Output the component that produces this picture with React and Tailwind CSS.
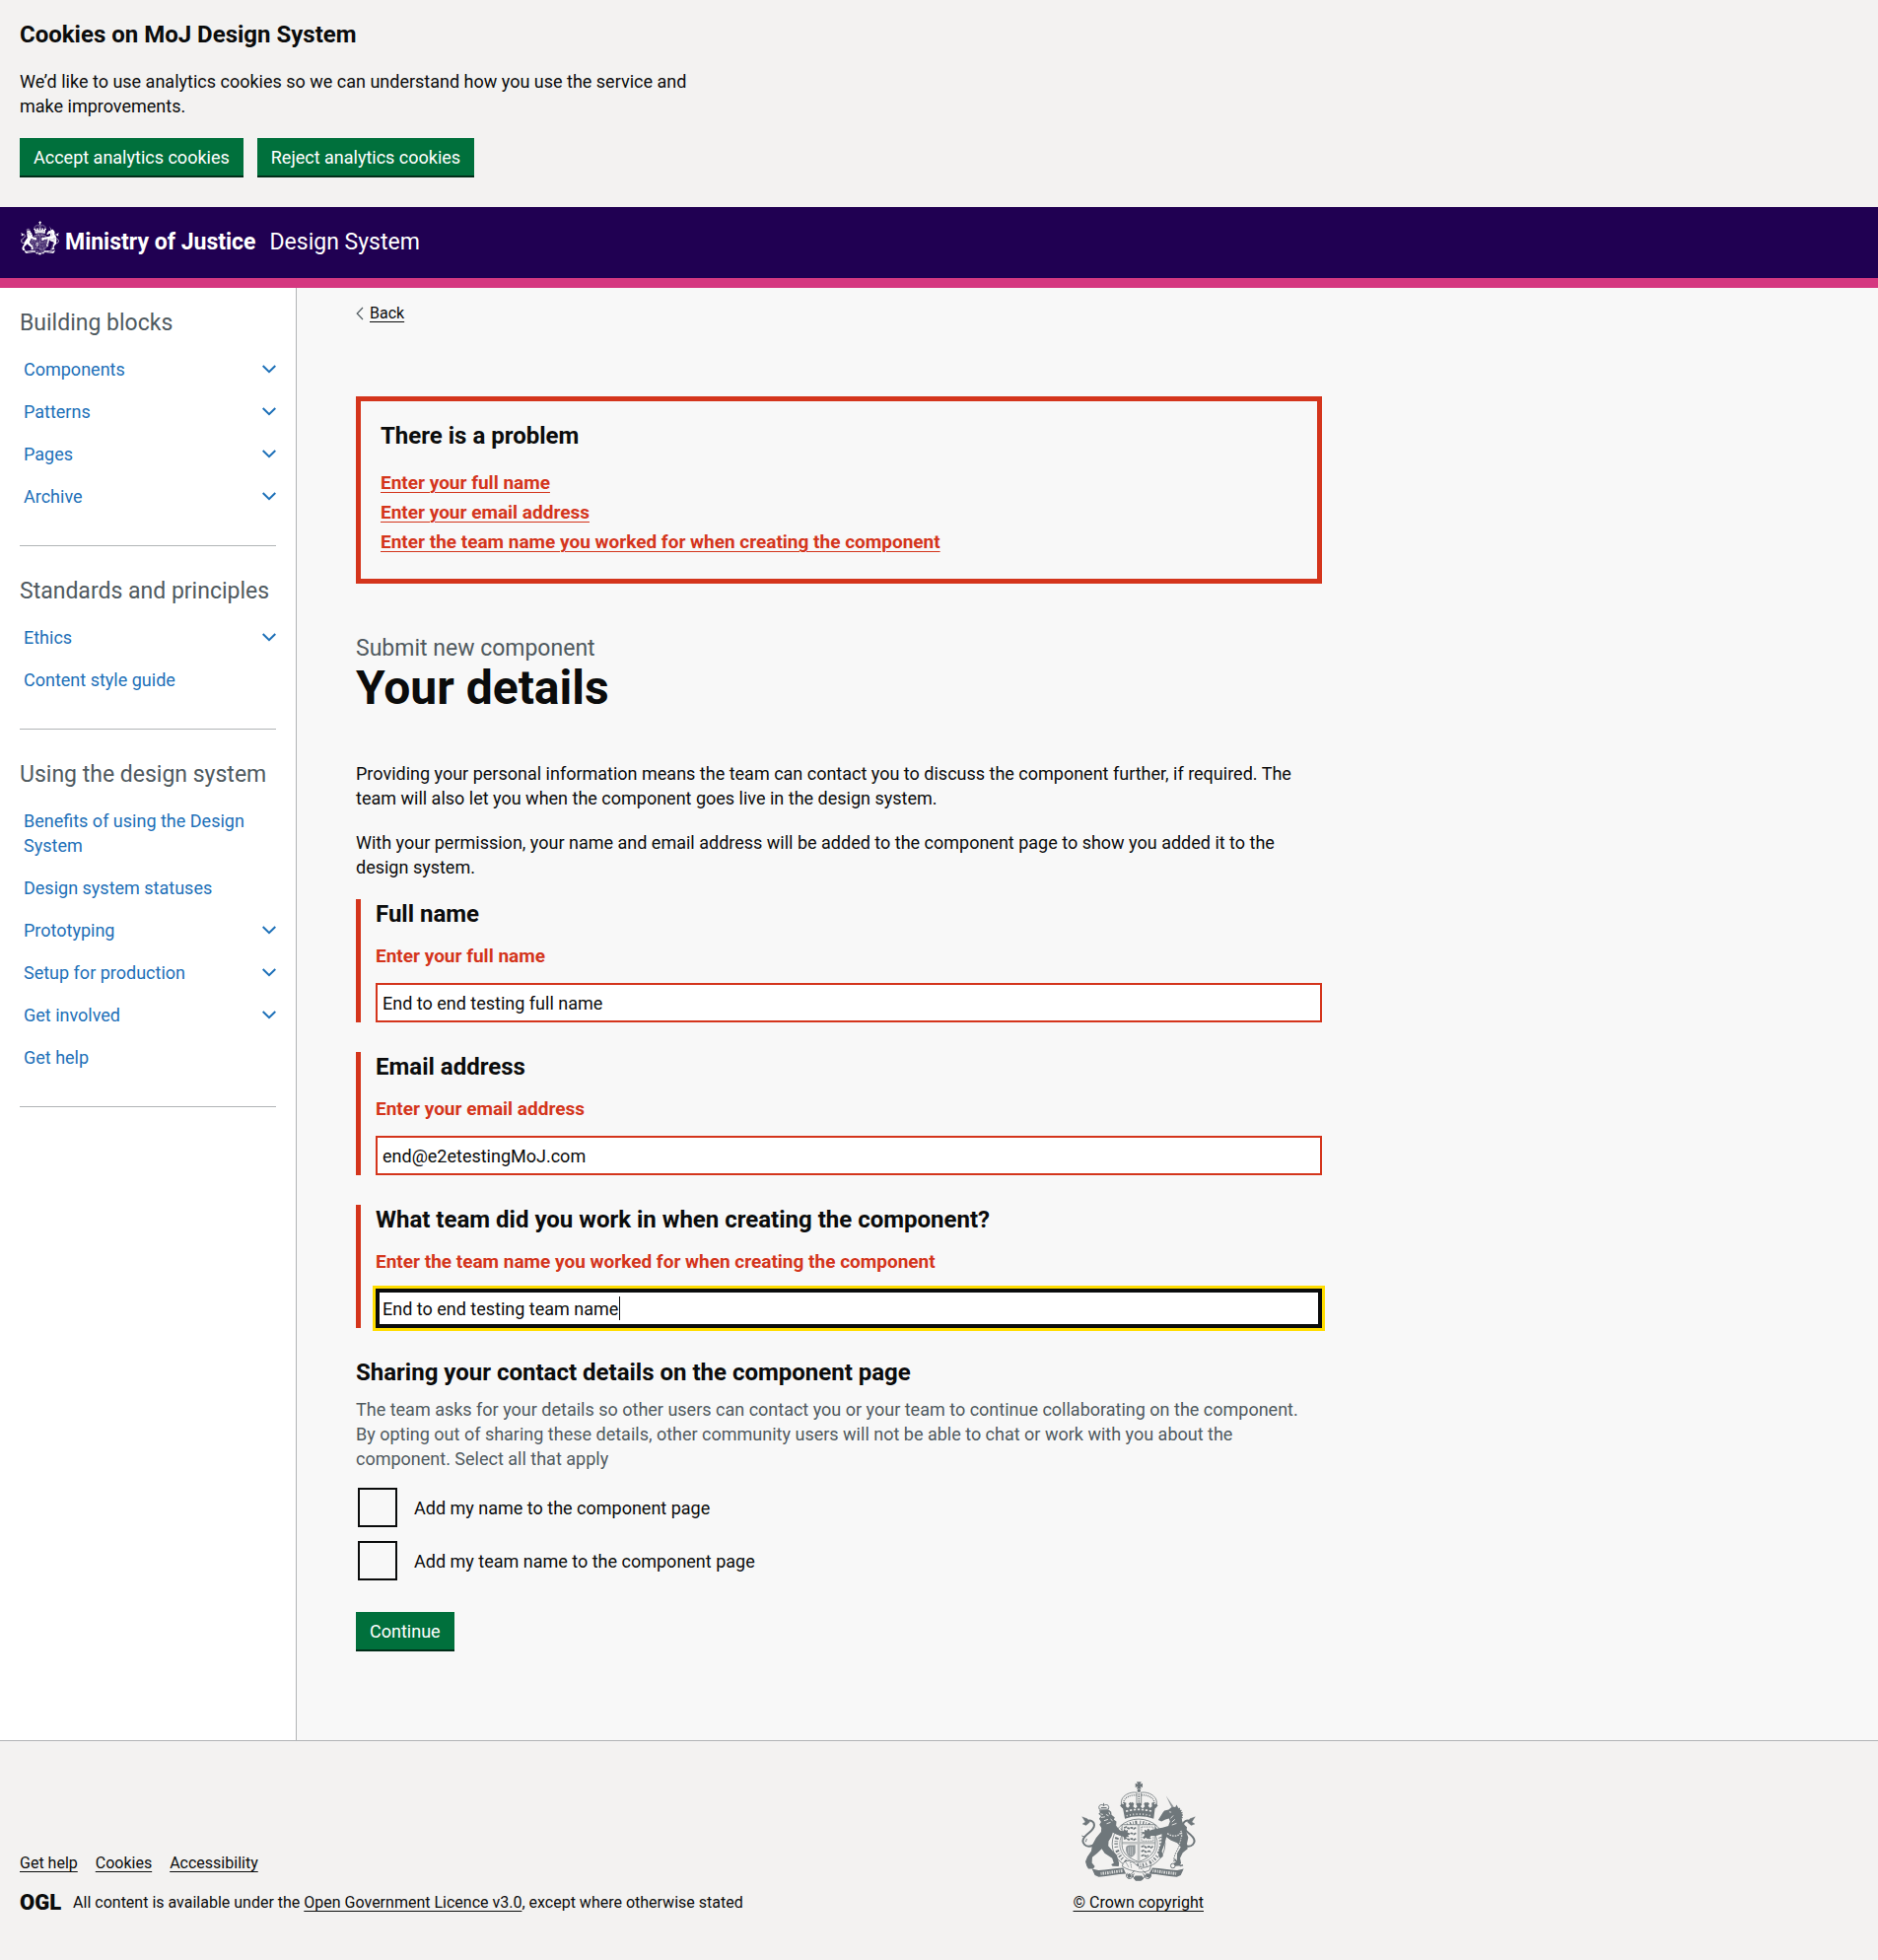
import { useId } from "react";

const navSections = [
  {
    title: "Building blocks",
    items: [
      { label: "Components", expandable: true },
      { label: "Patterns", expandable: true },
      { label: "Pages", expandable: true },
      { label: "Archive", expandable: true },
    ],
  },
  {
    title: "Standards and principles",
    items: [
      { label: "Ethics", expandable: true },
      { label: "Content style guide" },
    ],
  },
  {
    title: "Using the design system",
    items: [
      { label: "Benefits of using the Design System" },
      { label: "Design system statuses" },
      { label: "Prototyping", expandable: true },
      { label: "Setup for production", expandable: true },
      { label: "Get involved", expandable: true },
      { label: "Get help" },
    ],
  },
];

const errors = [
  { id: "full-name", text: "Enter your full name" },
  { id: "email", text: "Enter your email address" },
  { id: "team", text: "Enter the team name you worked for when creating the component" },
];

/* Royal coat of arms in the current text colour; `paper` is the colour of its engraved lines. */
function Crest({ className, paper }) {
  return (
    <svg viewBox="81 77 350 308" className={className} fill="currentColor" aria-hidden="true">
      {/* crown */}
      <path d="M250 78h14l-3 7 7-3v13l-7-3 3 8h-14l3-8-7 3v-13l7 3z" />
      <circle cx="257" cy="105" r="5" />
      <g fill="none" stroke="currentColor">
        <path d="M207 158C190 124 228 106 252 111" strokeWidth="2.5" />
        <path d="M307 158c17-34-21-52-45-47" strokeWidth="2.5" />
        <path d="M213 155C200 128 232 116 250 119" strokeWidth="4" strokeDasharray="3 3" />
        <path d="M301 155c13-27-19-39-37-36" strokeWidth="4" strokeDasharray="3 3" />
        <path d="M250 112v34M264 112v34" strokeWidth="2.5" />
        <path d="M257 114v32" strokeWidth="5" strokeDasharray="4 3" />
      </g>
      <path d="M208 160l-9-9 5-7 6 4 1-8 7 3-1 10 6 5 6-6-4-7 6-5 3 3 3-3 5 5-3 8 7 6 6-6-4-6 4-5 4 2 1-8 1 8 4-2 4 5-4 6 6 6 7-6-3-8 5-5 3 3 3-3 6 5-4 7 6 6 6-5-1-10 7-3 1 8 6-4 5 7-9 9-4 31c-28-10-60-10-88 0z" />
      <g fill="none" stroke={paper} strokeOpacity=".9">
        <path d="M217 168c26-7 54-7 80 0" strokeWidth="5" strokeDasharray="7 5" />
        <path d="M219 182c25-7 51-7 76 0" strokeWidth="5" strokeDasharray="3 7" />
      </g>

      {/* garter ring */}
      <g fill="none" stroke="currentColor">
        <ellipse cx="256" cy="268" rx="81" ry="76" strokeWidth="2.5" />
        <ellipse cx="256" cy="268" rx="58" ry="57" strokeWidth="2" />
        <ellipse cx="256" cy="268" rx="69" ry="66" strokeWidth="11" strokeDasharray="3 6 4 5 2 5 6 9" />
      </g>

      {/* shield */}
      <path d="M205 209h102v62c0 28-26 43-51 52-25-9-51-24-51-52z" fill={paper} stroke="currentColor" strokeWidth="2.5" />
      <path d="M256 210v110M206 265h100" fill="none" stroke="currentColor" strokeOpacity=".4" strokeWidth="8" />
      <g fill="none" stroke="currentColor" strokeWidth="5" strokeLinejoin="round" strokeDasharray="9 2">
        <path d="M211 219l8-3 6 5 10-3 6 4 8-5M211 236l8-3 6 5 10-3 6 4 8-5M211 253l8-3 6 5 10-3 6 4 8-5" />
        <path d="M264 277l8-3 6 5 10-3 6 4 6-5M264 291l8-3 6 5 10-3 6 4M264 305l8-3 6 4 8-3" />
      </g>
      <path d="M265 216h36v43h-36z" fill="none" stroke="currentColor" strokeWidth="2.5" strokeDasharray="3 2" />
      <path d="M274 224l7 3 3-6 7 4-3 8 7-3-2 9-7 2 4 6 5 5-9 1-6-6-7 6-5-5 6-6-2-6-6 3 1-8 7 1z" />
      <path d="M218 276c8-7 19-2 28-5v24c-2 8-8 12-14 14-10-6-18-18-14-33z" fillOpacity=".75" />
      <path d="M225 278v20M231 277v26M237 277v26" stroke={paper} strokeWidth="2" strokeOpacity=".7" />

      {/* lion */}
      <path d="M136 162c-6-14 8-17 13-11 6-6 20-3 14 11z" fill="none" stroke="currentColor" strokeWidth="3" />
      <path d="M149 143v9M141 157h17" stroke="currentColor" strokeWidth="3" />
      <path d="M135 165l29-2 8 7 1 9 10 8-3 6 8 6-1 13 12 15 10 2 3-7 5 5 6-2-1 8 6 3-5 5 4 6-9-1-4 6-6-7-19-6-12-6-4 12-9 15-1 14 13 15 13 13 7 25-1 10-19-1-4-5 8-4-5-15-23-15-9-14-14 14-15 12-1 17 9 11-5 7-15 0-5-8-4-14 6-15 12-17 3-19 12-22 15-18 1-12-6-10 5-8-6-10 6-8-8-7 5-5z" />
      <g fill="none" stroke={paper} strokeWidth="3" strokeOpacity=".85">
        <path d="M139 176l8 2M141 187l12-2M150 197l12-4M158 206l12-4M156 178l8 4M170 192l6 5M165 170l3 8" />
        <path d="M146 300l14 8M128 306l-5 13" />
      </g>
      <g fill="none" stroke="currentColor">
        <path d="M120 271C92 284 78 263 90 247c14-17 29-20 30-36 0-12-12-19-23-11" strokeWidth="6" />
        <path d="M83 185l16 6 8 10-12 10-11-4 9-6z" fill="currentColor" strokeWidth="1" />
        <path d="M90 247l-8-4M97 252l-3 10" strokeWidth="3" />
      </g>

      {/* unicorn */}
      <path d="M340 121l27 38-7 4z" fillOpacity=".75" />
      <path d="M330 172l5-6 13-3 8-7 13-1 3-7 5 9 8 8 4 14-1 14 4 12 12 12-2 14 6 17-4 19 2 16-15 12-8 17 3 15-6 8-12 1-5-7 10-9 1-23 11-19-11-13-20-8-13-10-5 20-9 23 4 16-8 6-6-6 1-20 8-22 1-26-18 5-14 0-12 10-7-6 4-12 15-10 17-4 17-3 18-5 5-14-3-9-11 3-12 6-10-4z" />
      <path d="M378 160c14 11 14 31-3 47" fill="none" stroke="currentColor" strokeWidth="7" strokeDasharray="4 3" />
      <g fill="none" stroke={paper} strokeOpacity=".85">
        <path d="M350 170l6 1M362 181l-8 9M367 193l-9 8M372 205l-14 5" strokeWidth="3" />
        <path d="M344 236c20 14 42 7 42-8 10 30-25 64-16 84" strokeWidth="4" strokeDasharray="5 3" />
      </g>
      <g fill="none" stroke="currentColor">
        <path d="M392 271c28 13 42-8 30-24-14-17-29-20-30-36 0-12 12-19 23-11" strokeWidth="6" />
        <path d="M429 185l-16 6-8 10 12 10 11-4-9-6z" fill="currentColor" strokeWidth="1" />
        <path d="M388 250c-4 29-31 54-22 77" strokeWidth="3" strokeDasharray="5 3" />
        <circle cx="361" cy="335" r="7" strokeWidth="3" />
        <path d="M366 315l18 20 8-2" strokeWidth="5" />
      </g>

      {/* scroll and compartment */}
      <path d="M113 344l20 5c25-2 50-7 76-8l8 18c-27 1-54 7-83 10l-12-5z" />
      <path d="M394 344l-20 5c-25-2-50-7-76-8l-10 18c27 1 54 7 85 10l12-5z" />
      <path d="M140 359c22-2 44-6 68-9M299 350c24 3 48 7 72 9" fill="none" stroke={paper} strokeWidth="9" strokeDasharray="3 3 5 3" strokeOpacity=".8" />
      <path d="M208 328c12-14 28-8 38 2 14 12 29 14 48 3l-4 15c-14 8-30 8-42 4-14-2-28-6-42-15z" fill={paper} stroke="currentColor" strokeWidth="2.5" />
      <g fill="none" stroke="currentColor" strokeWidth="3">
        <path d="M222 357c-10 10 1 21 12 16l8-14M290 357c10 10-1 21-12 16l-8-14" />
        <path d="M243 350l-9 10 12 18h21l13-18-10-10" />
        <path d="M218 326l8 14M231 324l3 17M256 342l14 4" strokeDasharray="4 3" />
      </g>
      <path d="M246 365h20l5 8-8 8h-16l-7-8zM220 362l9-4 6 10-10 6zM276 368l7-10 11 4-4 11z" />
    </svg>
  );
}

function Chevron() {
  return (
    <svg viewBox="0 0 14 9" className="h-[9px] w-3.5 shrink-0" fill="none" stroke="currentColor" strokeWidth="2" aria-hidden="true">
      <path d="M.7 1 7 7.2 13.3 1" />
    </svg>
  );
}

function GreenButton({ children, type = "button" }) {
  return (
    <button type={type} className="h-10 cursor-pointer border-b-2 border-[#002d18] bg-[#00703c] px-3.5 text-lg leading-[25px] text-white">
      {children}
    </button>
  );
}

function Field({ id, label, error, value, type = "text", focused }) {
  return (
    <div className="mb-[30px] border-l-[5px] border-[#d4351c] pl-[15px]">
      <label htmlFor={id} className="mb-[15px] block text-2xl leading-[30px] font-bold">
        {label}
      </label>
      <p id={`${id}-error`} className="mb-[15px] text-[19px] leading-[25px] font-bold text-[#d4351c]">
        {error}
      </p>
      <div className="relative">
        <input
          id={id}
          name={id}
          type={type}
          defaultValue={value}
          aria-describedby={`${id}-error`}
          className={
            focused
              ? "block h-10 w-full border-4 border-[#0b0c0c] bg-white px-[3px] text-lg outline-3 outline-[#ffdd00]"
              : "block h-10 w-full border-2 border-[#d4351c] bg-white px-[5px] text-lg"
          }
        />
        {focused && <span aria-hidden="true" className="absolute inset-y-2 left-[247px] w-px bg-[#0b0c0c]" />}
      </div>
    </div>
  );
}

function Checkbox({ label }) {
  const id = useId();
  return (
    <div className="flex items-center gap-[17px] p-0.5">
      <input id={id} type="checkbox" className="size-10 shrink-0 appearance-none border-2 border-[#0b0c0c] checked:bg-[#0b0c0c]" />
      <label htmlFor={id} className="text-lg leading-[25px]">
        {label}
      </label>
    </div>
  );
}

function FooterLink({ children }) {
  return (
    <a href="#" className="underline decoration-1 underline-offset-[3px]">
      {children}
    </a>
  );
}

export default function App() {
  return (
    <div className="flex min-h-screen flex-col bg-[#f3f2f1] font-[Roboto,sans-serif] text-lg leading-[25px] text-[#0b0c0c]">
      <section aria-label="Cookies on MoJ Design System" className="px-5 pt-5 pb-[30px]">
        <h2 className="mb-5 text-2xl leading-[30px] font-bold">Cookies on MoJ Design System</h2>
        <p className="mb-5 max-w-[700px]">
          We’d like to use analytics cookies so we can understand how you use the service and make improvements.
        </p>
        <div className="flex flex-wrap gap-3.5">
          <GreenButton>Accept analytics cookies</GreenButton>
          <GreenButton>Reject analytics cookies</GreenButton>
        </div>
      </section>

      <header className="flex items-end border-b-10 border-[#d53880] bg-[#200052] px-5 pt-3.5 pb-[21px] text-[23px] leading-[30px] text-white">
        <a href="#" className="flex items-end gap-1.5">
          <Crest className="mb-0.5 ml-px h-[35px] w-[39px]" paper="#200052" />
          <span className="font-bold">Ministry of Justice</span>
        </a>
        <a href="#" className="ml-3.5">Design System</a>
      </header>

      <div className="flex grow">
        <nav aria-label="Sections" className="w-[301px] shrink-0 border-r border-[#b1b4b6] bg-white px-5 pt-[21px]">
          {navSections.map((section) => (
            <div key={section.title} className="mb-[31px] border-b border-[#b1b4b6] pb-7">
              <h2 className="mb-2.5 text-[23px] leading-[30px] text-[#505a5f]">{section.title}</h2>
              <ul>
                {section.items.map((item) => (
                  <li key={item.label}>
                    {item.expandable ? (
                      <button type="button" className="flex w-full cursor-pointer items-center justify-between py-[9px] pl-1 text-left text-[#1d70b8]">
                        {item.label}
                        <Chevron />
                      </button>
                    ) : (
                      <a href="#" className="block py-[9px] pl-1 text-[#1d70b8]">
                        {item.label}
                      </a>
                    )}
                  </li>
                ))}
              </ul>
            </div>
          ))}
        </nav>

        <main className="grow bg-[#f8f8f8] px-[60px] pt-4 pb-[90px]">
          <div className="max-w-[980px]">
            <a href="#" className="flex w-fit items-center gap-1.5 text-base leading-5">
              <svg viewBox="0 0 8 14" className="h-3.5 w-2" fill="none" stroke="#505a5f" strokeWidth="1.2" aria-hidden="true">
                <path d="M7 1 1.2 7 7 13" />
              </svg>
              <span className="underline decoration-1 underline-offset-[3px]">Back</span>
            </a>

            <section aria-labelledby="error-title" className="mt-[74px] mb-[51px] border-[5px] border-[#d4351c] p-5">
              <h2 id="error-title" className="mb-5 text-2xl leading-[30px] font-bold">
                There is a problem
              </h2>
              <ul>
                {errors.map((error) => (
                  <li key={error.id} className="mb-[5px] text-[19px]">
                    <a href={`#${error.id}`} className="font-bold text-[#d4351c] underline decoration-1 underline-offset-[3px]">
                      {error.text}
                    </a>
                  </li>
                ))}
              </ul>
            </section>

            <p className="text-[23px] leading-[30px] text-[#505a5f]">Submit new component</p>
            <h1 className="mb-[49px] text-5xl leading-[50px] font-bold">Your details</h1>

            <p className="mb-5">
              Providing your personal information means the team can contact you to discuss the component further, if required. The team will also let you when the component goes live in the design system.
            </p>
            <p className="mb-5">
              With your permission, your name and email address will be added to the component page to show you added it to the design system.
            </p>

            <form onSubmit={(event) => event.preventDefault()}>
              <Field id="full-name" label="Full name" error={errors[0].text} value="End to end testing full name" />
              <Field id="email" type="email" label="Email address" error={errors[1].text} value="end@e2etestingMoJ.com" />
              <Field id="team" label="What team did you work in when creating the component?" error={errors[2].text} value="End to end testing team name" focused />

              <fieldset className="mb-[30px]" aria-describedby="sharing-hint">
                <legend className="mb-2.5 text-2xl leading-[30px] font-bold">Sharing your contact details on the component page</legend>
                <p id="sharing-hint" className="mb-[15px] max-w-[970px] text-[#505a5f]">
                  The team asks for your details so other users can contact you or your team to continue collaborating on the component. By opting out of sharing these details, other community users will not be able to chat or work with you about the component. Select all that apply
                </p>
                <div className="flex flex-col gap-2.5">
                  <Checkbox label="Add my name to the component page" />
                  <Checkbox label="Add my team name to the component page" />
                </div>
              </fieldset>
              <GreenButton type="submit">Continue</GreenButton>
            </form>
          </div>
        </main>
      </div>

      <footer className="border-t border-[#b1b4b6] px-5 pt-[41px] pb-[49px] text-base leading-5">
        <div className="flex max-w-[1201px] items-end justify-between">
          <div>
            <ul className="mb-5 flex gap-[18px]">
              <li><FooterLink>Get help</FooterLink></li>
              <li><FooterLink>Cookies</FooterLink></li>
              <li><FooterLink>Accessibility</FooterLink></li>
            </ul>
            <div className="flex items-center gap-3">
              <span className="text-[22px] font-black">OGL</span>
              <p>
                All content is available under the <FooterLink>Open Government Licence v3.0</FooterLink>, except where otherwise stated
              </p>
            </div>
          </div>
          <div className="flex flex-col items-center">
            <span className="mb-[11px] text-[#6f777b]">
              <Crest className="h-[102px] w-[116px]" paper="#f3f2f1" />
            </span>
            <FooterLink>© Crown copyright</FooterLink>
          </div>
        </div>
      </footer>
    </div>
  );
}
